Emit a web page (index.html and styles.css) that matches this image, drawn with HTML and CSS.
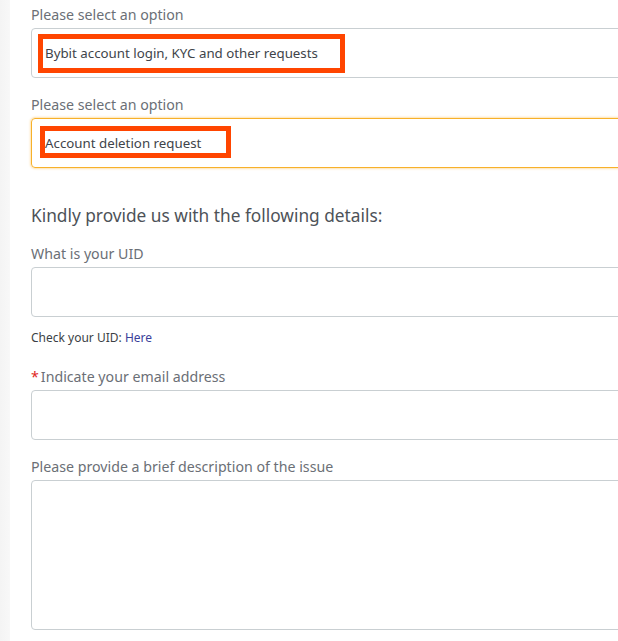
FILE: index.html
```html
<!DOCTYPE html>
<html lang="en">
<head>
  <meta charset="UTF-8">
  <meta name="viewport" content="width=device-width, initial-scale=1.0">
  <title>Support Request</title>
  <link rel="stylesheet" href="styles.css">
</head>
<body>
  <div class="page">
    <div class="side-strip"></div>
    <form class="ticket-form">
      <div class="field">
        <label class="field-label">Please select an option</label>
        <div class="select-box">
          <span class="select-value">Bybit account login, KYC and other requests</span>
          <span class="mark mark-first"></span>
        </div>
      </div>

      <div class="field">
        <label class="field-label">Please select an option</label>
        <div class="select-box focused">
          <span class="select-value">Account deletion request</span>
          <span class="mark mark-second"></span>
        </div>
      </div>

      <h2 class="section-title">Kindly provide us with the following details:</h2>

      <div class="field">
        <label class="field-label">What is your UID</label>
        <input class="text-input" type="text">
        <p class="hint">Check your UID: <a href="#">Here</a></p>
      </div>

      <div class="field">
        <label class="field-label"><span class="required">*</span>Indicate your email address</label>
        <input class="text-input" type="email">
      </div>

      <div class="field">
        <label class="field-label">Please provide a brief description of the issue</label>
        <textarea class="text-area"></textarea>
      </div>
    </form>
  </div>
</body>
</html>
```

FILE: styles.css
```css
body {
  margin: 0;
  padding: 0;
  background: #fff;
  font-family: "Noto Sans", Arial, sans-serif;
  color: #333;
  overflow: hidden;
}

.page {
  display: flex;
  height: 641px;
  overflow: hidden;
}

.side-strip {
  width: 10px;
  flex-shrink: 0;
  background: linear-gradient(to right, #f4f4f4, #f8f8f8);
}

.ticket-form {
  width: 700px;
  flex-shrink: 0;
  padding: 5px 0 0 21px;
}

.field {
  margin-bottom: 17px;
}

.field-label {
  display: block;
  font-size: 14.2px;
  line-height: 20px;
  color: #6b6f76;
  margin-bottom: 3px;
}

.required {
  color: #e0241b;
  margin-right: 2px;
}

.select-box {
  position: relative;
  height: 48px;
  border: 1px solid #c9cfd2;
  border-radius: 4px;
  display: flex;
  align-items: center;
  padding-left: 13px;
}

.select-box.focused {
  border-color: #f7b12a;
  box-shadow: 0 0 2px 1px rgba(252, 190, 80, 0.45);
}

.select-value {
  font-size: 13.3px;
  color: #40444a;
}

/* annotation boxes drawn over the selects */
.mark {
  position: absolute;
  border: 5px solid #ff4500;
  box-sizing: border-box;
}

.mark-first {
  left: 6px;
  top: 5px;
  width: 307px;
  height: 39px;
}

.mark-second {
  left: 8px;
  top: 7px;
  width: 191px;
  height: 32px;
}

.section-title {
  font-size: 17.3px;
  font-weight: normal;
  color: #4d5258;
  margin: 36px 0 16px;
  line-height: 24px;
}

.text-input {
  display: block;
  box-sizing: border-box;
  width: 100%;
  height: 50px;
  border: 1px solid #c9cfd2;
  border-radius: 4px;
  margin: 0;
}

.text-area {
  display: block;
  box-sizing: border-box;
  width: 100%;
  height: 150px;
  border: 1px solid #c9cfd2;
  border-radius: 4px;
  resize: none;
  margin: 0;
}

.hint {
  font-size: 12px;
  color: #3b3f45;
  margin: 13px 0 0;
  padding-bottom: 4px;
  line-height: 16px;
}

.hint a {
  color: #3b3f9a;
  text-decoration: none;
}
```
